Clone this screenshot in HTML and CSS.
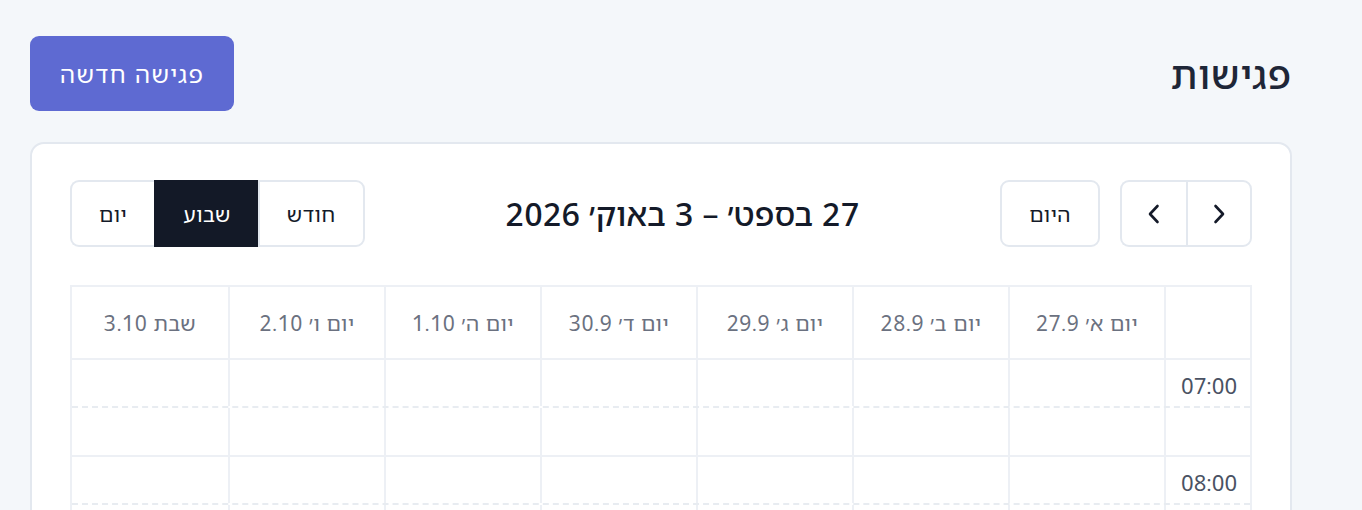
FILE: index.html
```html
<!DOCTYPE html>
<html lang="he" dir="rtl">
<head>
    <meta charset="UTF-8">
    <meta name="viewport" content="width=device-width, initial-scale=1.0">
    <title>פגישות</title>
    <link rel="stylesheet" href="styles.css">
</head>
<body>
    <main class="page">
        <header class="page-header">
            <h1>פגישות</h1>
            <button class="btn-primary">פגישה חדשה</button>
        </header>

        <section class="card">
            <div class="toolbar">
                <div class="toolbar-group">
                    <div class="btn-group">
                        <button class="btn btn-icon" aria-label="הקודם">
                            <svg width="14" height="22" viewBox="0 0 14 22"><path d="M3.5 3 L11 11 L3.5 19" /></svg>
                        </button>
                        <button class="btn btn-icon" aria-label="הבא">
                            <svg width="14" height="22" viewBox="0 0 14 22"><path d="M10.5 3 L3 11 L10.5 19" /></svg>
                        </button>
                    </div>
                    <button class="btn">היום</button>
                </div>

                <h2 class="toolbar-title">27 בספט׳ – 3 באוק׳ 2026</h2>

                <div class="btn-group">
                    <button class="btn">חודש</button>
                    <button class="btn active">שבוע</button>
                    <button class="btn">יום</button>
                </div>
            </div>

            <div class="calendar">
                <div class="cal-row cal-head">
                    <div class="cal-cell axis"></div>
                    <div class="cal-cell">יום א׳ 27.9</div>
                    <div class="cal-cell">יום ב׳ 28.9</div>
                    <div class="cal-cell">יום ג׳ 29.9</div>
                    <div class="cal-cell">יום ד׳ 30.9</div>
                    <div class="cal-cell">יום ה׳ 1.10</div>
                    <div class="cal-cell">יום ו׳ 2.10</div>
                    <div class="cal-cell">שבת 3.10</div>
                </div>
                <div id="slots"></div>
            </div>
        </section>
    </main>

    <script>
        // שורות של חצי שעה
        const slots = document.getElementById('slots');
        for (let h = 7; h < 10; h++) {
            ['00', '30'].forEach(m => {
                const row = document.createElement('div');
                row.className = 'cal-row slot' + (m === '00' ? ' hour' : ' half');
                let html = `<div class="cal-cell axis">${m === '00' ? String(h).padStart(2, '0') + ':00' : ''}</div>`;
                for (let d = 0; d < 7; d++) html += '<div class="cal-cell"></div>';
                row.innerHTML = html;
                slots.appendChild(row);
            });
        }
    </script>
</body>
</html>
```

FILE: styles.css
```css
/* Reset */
* { margin: 0; padding: 0; box-sizing: border-box; }

html, body {
    height: 100%;
    overflow: hidden;
}

body {
    font-family: "Noto Sans Hebrew", "Noto Sans", sans-serif;
    background: #f4f7fa;
    color: #141a29;
}

.page {
    padding: 36px 70px 0 30px;
}

/* Header */
.page-header {
    display: flex;
    justify-content: space-between;
    align-items: center;
}

.page-header h1 {
    font-size: 38px;
    font-weight: 500;
    letter-spacing: 1px;
    color: #1e2637;
}

.btn-primary {
    font-family: inherit;
    font-size: 24px;
    letter-spacing: 1.4px;
    color: white;
    background: #5e6ad2;
    border: none;
    border-radius: 9px;
    height: 75px;
    padding: 0 30px;
    cursor: pointer;
}

/* Card */
.card {
    margin-top: 31px;
    background: white;
    border: 2px solid #e3e8ef;
    border-radius: 14px;
    padding: 36px 38px;
    min-height: 600px;
}

.toolbar {
    display: flex;
    justify-content: space-between;
    align-items: center;
    margin-bottom: 38px;
}

.toolbar-group {
    display: flex;
    gap: 20px;
}

.toolbar-title {
    font-size: 32px;
    font-weight: 500;
    letter-spacing: 0.2px;
    color: #141a29;
}

.btn {
    font-family: inherit;
    font-size: 21px;
    letter-spacing: 0.5px;
    color: #141a29;
    background: white;
    border: 2px solid #e3e8ef;
    border-radius: 9px;
    height: 67px;
    padding: 0 27px;
    cursor: pointer;
}

.btn-group {
    display: flex;
}

.btn-group .btn {
    border-radius: 0;
}

.btn-group .btn + .btn {
    border-right: none;
}

.btn-group .btn:first-child {
    border-radius: 0 9px 9px 0;
}

.btn-group .btn:last-child {
    border-radius: 9px 0 0 9px;
}

.btn-group .btn.active {
    background: #131927;
    border-color: #131927;
    color: white;
}

.btn-icon {
    width: 66px;
    padding: 0;
    display: flex;
    align-items: center;
    justify-content: center;
}

.btn-icon svg path {
    fill: none;
    stroke: #141a29;
    stroke-width: 2.6;
    stroke-linecap: round;
    stroke-linejoin: round;
}

/* Calendar */
.calendar {
    border: 2px solid #edf0f5;
    border-bottom: none;
}

.cal-row {
    display: grid;
    grid-template-columns: 86px repeat(7, 1fr);
}

.cal-cell {
    border-left: 2px solid #edf0f5;
}

.cal-cell:last-child {
    border-left: none;
}

.cal-head {
    height: 73px;
    border-bottom: 2px solid #edf0f5;
}

.cal-head .cal-cell {
    display: flex;
    align-items: center;
    justify-content: center;
    font-size: 21px;
    letter-spacing: 0.5px;
    color: #6b7180;
}

.slot {
    height: 48.4px;
}

.slot.hour {
    border-bottom: 2px dashed #e8ecf1;
}

.slot.half {
    border-bottom: 2px solid #edf0f5;
}

.slot .axis {
    font-size: 22px;
    color: #4a5263;
    text-align: left;
    padding: 11px 0 0 15px;
}
```
